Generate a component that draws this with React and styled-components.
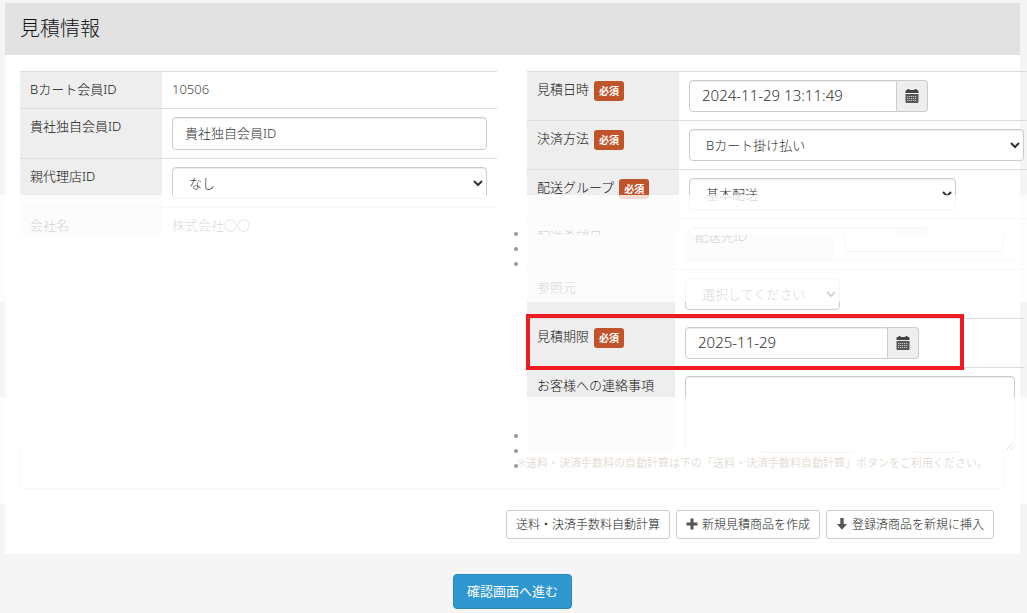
import React from 'react';
import styled, { createGlobalStyle } from 'styled-components';

const CalendarIcon = () => (
    <svg width="14" height="14" viewBox="0 0 14 14" aria-hidden="true">
        <path d="M2.5 0h2v1h5V0h2v1h1.2l.8.8V4H.5V1.8l.8-.8h1.2z" fill="#444" />
        <path d="M.5 5h13v8.2l-.8.8H1.3l-.8-.8z" fill="#555" />
        <path
            d="M2 7.5h10M2 9.5h10M2 11.5h10"
            stroke="#ccc"
            strokeWidth="1"
            strokeDasharray="1.2 0.8"
        />
    </svg>
);

const PlusIcon = () => (
    <svg width="12" height="12" viewBox="0 0 12 12" fill="#555" aria-hidden="true">
        <path d="M4.5.5h3v4h4v3h-4v4h-3v-4h-4v-3h4z" />
    </svg>
);

const ArrowDownIcon = () => (
    <svg width="12" height="12" viewBox="0 0 12 12" fill="#555" aria-hidden="true">
        <path d="M4.3 0h3.4v6H11L6 11.8 1 6h3.3z" />
    </svg>
);

const DateField = ({ id, value, width }) => (
    <DateGroup $width={width}>
        <DateInput id={id} type="text" defaultValue={value} />
        <DateButton type="button" aria-label="カレンダー">
            <CalendarIcon />
        </DateButton>
    </DateGroup>
);

const RequiredLabel = ({ htmlFor, children }) => (
    <>
        <label htmlFor={htmlFor}>{children}</label>
        <Badge>必須</Badge>
    </>
);

const MemberTable = () => (
    <Table>
        <tbody>
            <tr>
                <Th $width={142}>Bカート会員ID</Th>
                <TextTd>10506</TextTd>
            </tr>
            <tr>
                <Th $width={142}><label htmlFor="ownId">貴社独自会員ID</label></Th>
                <Td><Input id="ownId" type="text" defaultValue="貴社独自会員ID" /></Td>
            </tr>
            <tr>
                <Th $width={142}><label htmlFor="parent">親代理店ID</label></Th>
                <Td>
                    <Select id="parent">
                        <option>なし</option>
                    </Select>
                </Td>
            </tr>
            <tr>
                <Th $width={142}>会社名</Th>
                <TextTd>株式会社〇〇</TextTd>
            </tr>
        </tbody>
    </Table>
);

const OrderTable = () => (
    <Table $extra={7}>
        <tbody>
            <tr>
                <Th $width={152}><RequiredLabel htmlFor="quoteDate">見積日時</RequiredLabel></Th>
                <Td><DateField id="quoteDate" value="2024-11-29 13:11:49" width={239} /></Td>
            </tr>
            <tr>
                <Th $width={152}><RequiredLabel htmlFor="payment">決済方法</RequiredLabel></Th>
                <Td>
                    <Select id="payment">
                        <option>Bカート掛け払い</option>
                    </Select>
                </Td>
            </tr>
            <tr>
                <Th $width={152}><RequiredLabel htmlFor="group">配送グループ</RequiredLabel></Th>
                <Td>
                    <Select id="group" $width={267}>
                        <option>基本配送</option>
                    </Select>
                </Td>
            </tr>
            <tr>
                <Th $width={152}><label htmlFor="wishDate">配送希望日</label></Th>
                <Td><DateField id="wishDate" value="" width={239} /></Td>
            </tr>
        </tbody>
    </Table>
);

const DetailTable = () => (
    <Table $extra={-2}>
        <tbody>
            <tr>
                <Th $width={148} />
                <Td>
                    <Destination>
                        <DestinationLabel htmlFor="destination">配送先ID</DestinationLabel>
                        <DestinationValue><Input id="destination" type="text" /></DestinationValue>
                    </Destination>
                </Td>
            </tr>
            <tr>
                <Th $width={148}><label htmlFor="source">参照元</label></Th>
                <Td>
                    <Select id="source" $width={155}>
                        <option>選択してください</option>
                    </Select>
                </Td>
            </tr>
            <tr>
                <Th $width={148}><RequiredLabel htmlFor="limit">見積期限</RequiredLabel></Th>
                <Td><DateField id="limit" value="2025-11-29" width={234} /></Td>
            </tr>
            <tr>
                <Th $width={148}><label htmlFor="message">お客様への連絡事項</label></Th>
                <Td><TextArea id="message" /></Td>
            </tr>
        </tbody>
    </Table>
);

const App = () => {
    return (
        <Page>
            <GlobalStyle />
            <Panel>
                <PanelHeader>
                    <Title>見積情報</Title>
                </PanelHeader>
                <Columns>
                    <Column>
                        <Slice $height={164}><MemberTable /></Slice>
                    </Column>
                    <Column>
                        <Slice $height={164}><OrderTable /></Slice>
                        <Slice $height={215} $align="flex-end"><DetailTable /></Slice>
                        <Highlight />
                    </Column>
                </Columns>
                <NoteBox>
                    <FieldEdges>
                        <FieldEdge $width={94} />
                        <FieldEdge $width={48} />
                    </FieldEdges>
                    <Note>※送料・決済手数料の自動計算は下の「送料・決済手数料自動計算」ボタンをご利用ください。</Note>
                </NoteBox>
                <Actions>
                    <ActionButton type="button">送料・決済手数料自動計算</ActionButton>
                    <ActionButton type="button"><PlusIcon />新規見積商品を作成</ActionButton>
                    <ActionButton type="button"><ArrowDownIcon />登録済商品を新規に挿入</ActionButton>
                </Actions>
            </Panel>
            <SubmitRow>
                <SubmitButton type="submit">確認画面へ進む</SubmitButton>
            </SubmitRow>
            <Veil $top={195} />
            <Veil $top={397} />
            <Dots $top={232}><Dot /><Dot /><Dot /></Dots>
            <Dots $top={434}><Dot /><Dot /><Dot /></Dots>
        </Page>
    );
};

export default App;

const GlobalStyle = createGlobalStyle`
  * {
    box-sizing: border-box;
  }

  body {
    margin: 0;
    background-color: #f5f5f5;
    color: #444;
    font-family: "Noto Sans", "Noto Sans CJK JP", sans-serif;
    font-size: 13px;
    font-weight: 300;
    line-height: 20px;
  }

  button, input, select, textarea {
    font-family: inherit;
    font-weight: inherit;
  }
`;

const Page = styled.div`
  position: relative;
  overflow: hidden;
  padding: 3px 7px 4px 5px;
`;

const Panel = styled.section`
  background-color: #fff;
  padding-bottom: 15px;
`;

const PanelHeader = styled.header`
  display: flex;
  align-items: center;
  height: 52px;
  padding: 0 15px;
  background-color: #e2e2e2;
`;

const Title = styled.h1`
  margin: 0;
  font-size: 20px;
  font-weight: 300;
  line-height: 24px;
  color: #111;
`;

const Columns = styled.div`
  display: grid;
  grid-template-columns: 477fr 500fr;
  column-gap: 30px;
  margin-right: -7px;
  padding: 16px 0 0 15px;
`;

const Column = styled.div`
  position: relative;
  min-width: 0;
`;

const Slice = styled.div`
  display: flex;
  align-items: ${props => props.$align || 'flex-start'};
  height: ${props => props.$height}px;
  overflow: hidden;
`;

const Table = styled.table`
  flex: none;
  width: calc(100% + ${props => props.$extra || 0}px);
  table-layout: fixed;
  border-spacing: 0;
`;

const Th = styled.th`
  width: ${props => props.$width}px;
  padding: 7px 0 9px 10px;
  border-top: 1px solid #ddd;
  background-color: #eee;
  color: #111;
  font-weight: 300;
  text-align: left;
  vertical-align: top;
  white-space: nowrap;
`;

const Td = styled.td`
  padding: 8px 10px;
  border-top: 1px solid #ddd;
  vertical-align: top;
`;

const TextTd = styled(Td)`
  padding: 7px 10px 9px;
`;

const Badge = styled.span`
  display: inline-block;
  margin-top: 2px;
  margin-left: 5px;
  padding: 0 5px;
  border-radius: 3px;
  background-color: #c1532a;
  color: #fff;
  font-size: 10px;
  font-weight: 700;
  line-height: 20px;
  vertical-align: top;
`;

const Input = styled.input`
  display: block;
  width: 100%;
  height: 33px;
  padding: 0 12px 2px;
  border: 1px solid #ccc;
  border-radius: 4px;
  background-color: #fff;
  box-shadow: inset 0 1px 1px rgba(0, 0, 0, 0.075);
  color: #333;
  font-size: 13px;
`;

const Select = styled.select`
  display: block;
  width: ${props => (props.$width ? `${props.$width}px` : '100%')};
  height: 32px;
  padding: 0 12px;
  border: 1px solid #ccc;
  border-radius: 4px;
  background-color: #fff;
  box-shadow: inset 0 1px 1px rgba(0, 0, 0, 0.075);
  color: #333;
  font-size: 13px;
`;

const DateGroup = styled.div`
  display: flex;
  width: ${props => props.$width}px;
  height: 32px;
`;

const DateInput = styled(Input)`
  flex: 1;
  min-width: 0;
  height: 32px;
  border-radius: 4px 0 0 4px;
  font-size: 15px;
`;

const DateButton = styled.button`
  display: flex;
  align-items: center;
  justify-content: center;
  width: 31px;
  padding: 0;
  border: 1px solid #ccc;
  border-left: none;
  border-radius: 0 4px 4px 0;
  background-color: #eee;
`;

const TextArea = styled.textarea`
  display: block;
  width: 100%;
  height: 76px;
  margin-bottom: -10px;
  padding: 6px 12px;
  border: 1px solid #ccc;
  border-radius: 4px;
  background-color: #fff;
  box-shadow: inset 0 1px 1px rgba(0, 0, 0, 0.075);
  color: #333;
  font-size: 13px;
`;

const Destination = styled.div`
  display: flex;
  height: 50px;
  border-bottom: 1px solid #ddd;
`;

const DestinationLabel = styled.label`
  display: flex;
  align-items: center;
  width: 149px;
  padding-left: 10px;
  background-color: #eee;
  color: #111;
`;

const DestinationValue = styled.div`
  width: 180px;
  padding: 8px 10px;
`;

const Highlight = styled.div`
  position: absolute;
  top: 243px;
  left: -1px;
  width: 438px;
  height: 56px;
  border: 4px solid #ed1c24;
  pointer-events: none;
`;

const NoteBox = styled.div`
  height: 39px;
  margin: 0 16px 0 15px;
  border: 1px solid #ddd;
  border-top: none;
  border-radius: 0 0 4px 4px;
`;

const FieldEdges = styled.div`
  display: flex;
  justify-content: flex-end;
  gap: 59px;
  padding-right: 43px;
`;

const FieldEdge = styled.div`
  width: ${props => props.$width}px;
  height: 3px;
  border: 1px solid #ccc;
  border-top: none;
  border-radius: 0 0 4px 4px;
`;

const Note = styled.p`
  margin: 0;
  padding-right: 15px;
  color: #74501c;
  font-size: 11px;
  font-weight: 400;
  text-align: right;
`;

const Actions = styled.div`
  display: flex;
  justify-content: flex-end;
  gap: 6px;
  padding: 21px 26px 0 15px;
`;

const ActionButton = styled.button`
  display: flex;
  align-items: center;
  gap: 4px;
  height: 29px;
  padding: 0 9px 1px;
  border: 1px solid #ccc;
  border-radius: 3px;
  background-color: #fff;
  color: #222;
  font-size: 12px;
  white-space: nowrap;
`;

const SubmitRow = styled.div`
  display: flex;
  justify-content: center;
  padding-top: 20px;
`;

const SubmitButton = styled.button`
  height: 35px;
  padding: 0 13px 2px;
  border: 1px solid #2a88bd;
  border-radius: 4px;
  background-color: #3097d1;
  color: #fff;
  font-size: 13px;
  font-weight: 400;
`;

const Veil = styled.div`
  position: absolute;
  top: ${props => props.$top}px;
  left: 0;
  right: 0;
  height: 107px;
  background-color: rgba(255, 255, 255, 0.8);
  pointer-events: none;
`;

const Dots = styled.div`
  position: absolute;
  top: ${props => props.$top}px;
  left: 50%;
  display: flex;
  flex-direction: column;
  gap: 11px;
`;

const Dot = styled.span`
  width: 4px;
  height: 4px;
  border-radius: 50%;
  background-color: #999;
`;
